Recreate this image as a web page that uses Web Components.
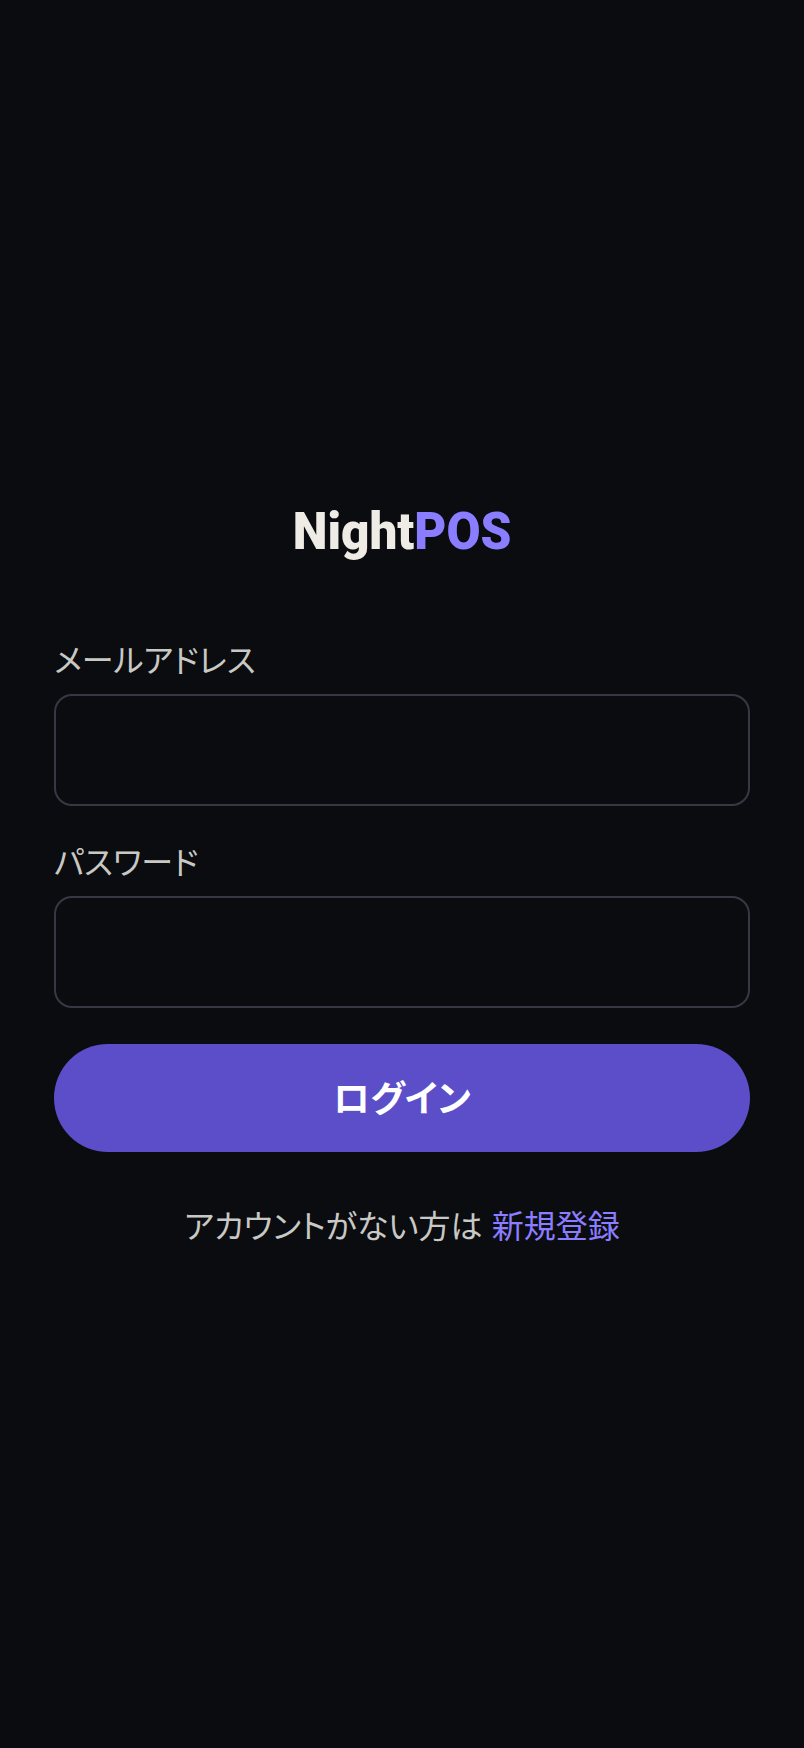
<!DOCTYPE html>
<html lang="ja">
<head>
<meta charset="utf-8">
<title>NightPOS</title>
<style>
  html, body { margin: 0; height: 100%; background: #0a0c10; }
</style>
</head>
<body>
<login-page>
  <brand-logo></brand-logo>
  <form-field label="メールアドレス" type="email"></form-field>
  <form-field label="パスワード" type="password"></form-field>
  <submit-button>ログイン</submit-button>
  <signup-note>アカウントがない方は <a href="#">新規登録</a></signup-note>
</login-page>
<script>
'use strict';

(function() {
    const FONT = `"Noto Sans CJK JP", "Noto Sans", sans-serif`;

    class LoginPage extends HTMLElement {
        constructor() {
            super();
            this.attachShadow({ mode: 'open' }).innerHTML = `
                <style>
                    :host {
                        box-sizing: border-box;
                        display: flex;
                        flex-direction: column;
                        justify-content: center;
                        min-height: 100vh;
                        padding: 0 54px 6px;
                        background: #0a0c10;
                        font-family: ${FONT};
                        font-feature-settings: "palt";
                    }
                </style>
                <slot></slot>
            `;
        }
    }

    class BrandLogo extends HTMLElement {
        constructor() {
            super();
            this.attachShadow({ mode: 'open' }).innerHTML = `
                <style>
                    :host {
                        display: block;
                        margin: 1px 0 68px;
                        text-align: center;
                        font: 900 52px/72px Roboto, sans-serif;
                        color: #eeece4;
                    }
                    div { display: inline-block; transform: scaleX(.95); }
                    span { color: #8b7dff; }
                </style>
                <div>Night<span>POS</span></div>
            `;
        }
    }

    class FormField extends HTMLElement {
        constructor() {
            super();
            const label = this.getAttribute('label');
            const type = this.getAttribute('type') || 'text';
            this.attachShadow({ mode: 'open' }).innerHTML = `
                <style>
                    :host { display: block; margin-bottom: 32px; }
                    label {
                        display: block;
                        margin-bottom: 14px;
                        font-size: 32px;
                        line-height: 44px;
                        color: #c8c8c4;
                    }
                    input {
                        display: block;
                        box-sizing: border-box;
                        width: 100%;
                        height: 112px;
                        padding: 0 24px;
                        background: transparent;
                        border: 2px solid #363944;
                        border-radius: 18px;
                        outline: none;
                        color: #eeece4;
                        font: inherit;
                    }
                </style>
                <label>${label}</label>
                <input type="${type}">
            `;
        }
    }

    class SubmitButton extends HTMLElement {
        constructor() {
            super();
            this.attachShadow({ mode: 'open' }).innerHTML = `
                <style>
                    :host { display: block; margin-top: 4px; }
                    button {
                        display: block;
                        width: 100%;
                        height: 108px;
                        border: 0;
                        border-radius: 54px;
                        background: #5b4ec8;
                        color: #fff;
                        font: 700 36.5px/1 ${FONT};
                        font-feature-settings: "palt";
                    }
                </style>
                <button type="button"><slot></slot></button>
            `;
        }
    }

    class SignupNote extends HTMLElement {
        constructor() {
            super();
            this.attachShadow({ mode: 'open' }).innerHTML = `
                <style>
                    :host {
                        display: block;
                        margin-top: 48px;
                        text-align: center;
                        font-size: 32px;
                        line-height: 48px;
                        word-spacing: 2px;
                        color: #c8c8c4;
                    }
                    ::slotted(a) { color: #8b7dff; text-decoration: none; }
                </style>
                <slot></slot>
            `;
        }
    }

    customElements.define('login-page', LoginPage);
    customElements.define('brand-logo', BrandLogo);
    customElements.define('form-field', FormField);
    customElements.define('submit-button', SubmitButton);
    customElements.define('signup-note', SignupNote);
})();
</script>
</body>
</html>
